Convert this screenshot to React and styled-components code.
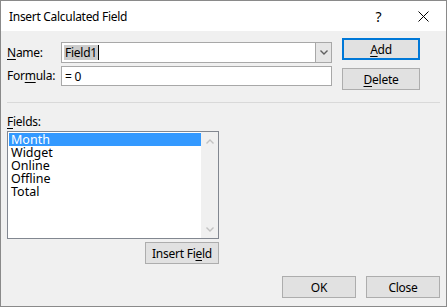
import React from "react";
import styled, { createGlobalStyle } from "styled-components";

const GlobalStyle = createGlobalStyle`
  html, body { margin: 0; padding: 0; background: #ffffff; }
  body { font-family: "Noto Sans", "Liberation Sans", sans-serif; }
  * { box-sizing: border-box; }
`;

const Window = styled.div`
  width: 447px;
  height: 307px;
  border: 1px solid #8a8a8a;
  display: flex;
  flex-direction: column;
  font-family: "Noto Sans", "Liberation Sans", sans-serif;
  font-size: 12px;
  letter-spacing: -0.25px;
  color: #000;
  background: #f0f0f0;
`;

const TitleBar = styled.div`
  height: 30px;
  background: #ffffff;
  display: flex;
  align-items: center;
  padding-left: 8px;
`;

const Title = styled.div`
  flex: 1;
  font-size: 12px;
  letter-spacing: -0.3px;
`;

const TitleButton = styled.div`
  width: 45px;
  height: 30px;
  display: flex;
  align-items: center;
  justify-content: center;
  font-size: 14px;
`;

const Body = styled.div`
  flex: 1;
  padding: 7px 6px 0 6px;
  display: flex;
  flex-direction: column;
`;

const TopSection = styled.div`
  display: flex;
  align-items: flex-start;
`;

const FormGrid = styled.div`
  display: grid;
  grid-template-columns: 54px 271px;
  grid-template-rows: 21px 20px;
  row-gap: 3px;
  margin-top: 4px;
  align-items: center;
`;

const Label = styled.label`
  font-size: 12px;
  line-height: 16px;
  u { text-decoration: underline; text-underline-offset: 2px; }
`;

const ComboBox = styled.div`
  height: 21px;
  display: flex;
  border: 1px solid #a8a8a8;
  background: #ffffff;
`;

const ComboText = styled.div`
  flex: 1;
  display: flex;
  align-items: center;
  padding-left: 2px;
`;

const SelectedText = styled.span`
  background: #cccccc;
  padding: 0 1px;
  line-height: 15px;
`;

const Caret = styled.span`
  display: inline-block;
  width: 1px;
  height: 15px;
  background: #000;
`;

const DropButton = styled.div`
  width: 16px;
  background: #e6e6e6;
  border-left: 1px solid #a8a8a8;
  display: flex;
  align-items: center;
  justify-content: center;
`;

const TextInput = styled.div`
  height: 20px;
  border: 1px solid #a8a8a8;
  background: #ffffff;
  display: flex;
  align-items: center;
  padding-left: 3px;
`;

const ButtonCol = styled.div`
  margin-left: 10px;
  display: flex;
  flex-direction: column;
  gap: 8px;
`;

const Button = styled.button`
  width: ${(p) => p.$w || 74}px;
  height: 22px;
  padding: 0;
  margin: 0;
  background: #e1e1e1;
  border: ${(p) => (p.$default ? "2px solid #0078d7" : "1px solid #adadad")};
  font-family: inherit;
  font-size: 12px;
  letter-spacing: inherit;
  color: #000;
  display: flex;
  align-items: center;
  justify-content: center;
  u { text-decoration: underline; text-underline-offset: 2px; }
`;

const Separator = styled.div`
  margin-top: 12px;
  height: 1px;
  width: 433px;
  background: #d9d9d9;
`;

const FieldsLabel = styled(Label)`
  margin-top: 11px;
  display: block;
`;

const ListArea = styled.div`
  width: 212px;
  margin-top: 1px;
  display: flex;
  flex-direction: column;
`;

const ListBox = styled.div`
  height: 108px;
  border: 1px solid #828790;
  background: #ffffff;
  display: flex;
`;

const Items = styled.div`
  flex: 1;
  padding: 1px 0 0 1px;
`;

const Item = styled.div`
  height: 13px;
  line-height: 13px;
  padding-left: 2px;
  font-size: 12.5px;
  letter-spacing: 0;
  background: ${(p) => (p.$selected ? "#3399ff" : "transparent")};
  color: ${(p) => (p.$selected ? "#ffffff" : "#000000")};
`;

const ScrollTrack = styled.div`
  width: 17px;
  background: #f0f0f0;
  display: flex;
  flex-direction: column;
  justify-content: space-between;
  align-items: center;
  padding: 7px 0 6px 0;
`;

const InsertRow = styled.div`
  display: flex;
  justify-content: flex-end;
  margin-top: 3px;
`;

const Footer = styled.div`
  display: flex;
  justify-content: flex-end;
  gap: 10px;
  margin-top: 12px;
`;

const Chevron = ({ up, color = "#c2c2c2", w = 8 }) => (
  <svg width={w} height="5" viewBox="0 0 8 5">
    <path
      d={up ? "M0.5 4.5 L4 1 L7.5 4.5" : "M0.5 0.5 L4 4 L7.5 0.5"}
      fill="none"
      stroke={color}
      strokeWidth="1.4"
    />
  </svg>
);

export default function App() {
  const fields = ["Month", "Widget", "Online", "Offline", "Total"];
  return (
    <>
      <GlobalStyle />
      <Window>
        <TitleBar>
          <Title>Insert Calculated Field</Title>
          <TitleButton>?</TitleButton>
          <TitleButton>
            <svg width="11" height="11" viewBox="0 0 11 11">
              <path d="M0.5 0.5 L10.5 10.5 M10.5 0.5 L0.5 10.5" stroke="#000" strokeWidth="1" />
            </svg>
          </TitleButton>
        </TitleBar>
        <Body>
          <TopSection>
            <FormGrid>
              <Label><u>N</u>ame:</Label>
              <ComboBox>
                <ComboText>
                  <SelectedText>Field1</SelectedText>
                  <Caret />
                </ComboText>
                <DropButton>
                  <Chevron color="#606060" w={8} />
                </DropButton>
              </ComboBox>
              <Label>For<u>m</u>ula:</Label>
              <TextInput>= 0</TextInput>
            </FormGrid>
            <ButtonCol>
              <Button $w={78} $default><span><u>A</u>dd</span></Button>
              <Button $w={78}><span><u>D</u>elete</span></Button>
            </ButtonCol>
          </TopSection>
          <Separator />
          <FieldsLabel><u>F</u>ields:</FieldsLabel>
          <ListArea>
            <ListBox>
              <Items>
                {fields.map((f, i) => (
                  <Item key={f} $selected={i === 0}>{f}</Item>
                ))}
              </Items>
              <ScrollTrack>
                <Chevron up />
                <Chevron />
              </ScrollTrack>
            </ListBox>
            <InsertRow>
              <Button><span>Insert Fi<u>e</u>ld</span></Button>
            </InsertRow>
          </ListArea>
          <Footer>
            <Button>OK</Button>
            <Button>Close</Button>
          </Footer>
        </Body>
      </Window>
    </>
  );
}
